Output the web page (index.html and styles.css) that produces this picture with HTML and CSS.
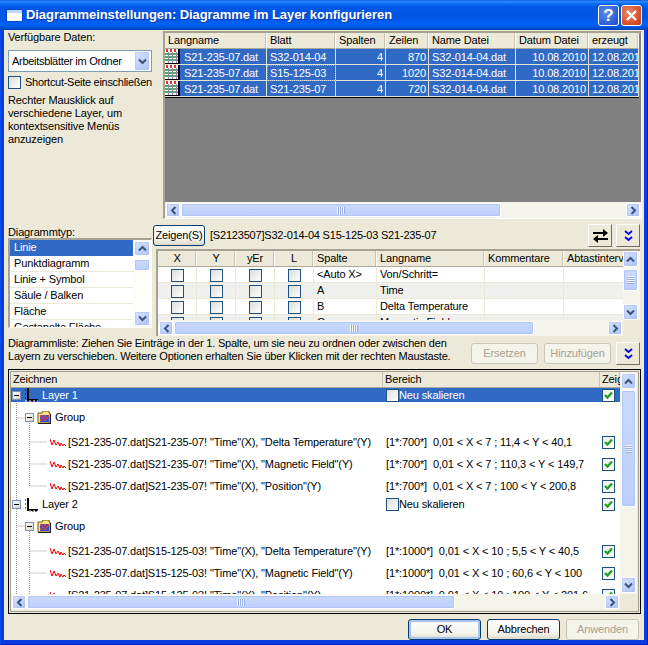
FILE: index.html
```html
<!DOCTYPE html>
<html lang="de">
<head>
<meta charset="utf-8">
<title>Diagrammeinstellungen</title>
<link rel="stylesheet" href="styles.css">
</head>
<body>
<svg class="defs" width="0" height="0" aria-hidden="true">
  <defs>
    <symbol id="i-up" viewBox="0 0 9 7"><path d="M1 5.5 4.5 2 8 5.5" fill="none" stroke="#3f5279" stroke-width="2"/></symbol>
    <symbol id="i-down" viewBox="0 0 9 7"><path d="M1 1.5 4.5 5 8 1.5" fill="none" stroke="#3f5279" stroke-width="2"/></symbol>
    <symbol id="i-left" viewBox="0 0 7 9"><path d="M5.5 1 2 4.5 5.5 8" fill="none" stroke="#3f5279" stroke-width="2"/></symbol>
    <symbol id="i-right" viewBox="0 0 7 9"><path d="M1.5 1 5 4.5 1.5 8" fill="none" stroke="#3f5279" stroke-width="2"/></symbol>
    <symbol id="i-dbl" viewBox="0 0 9 13"><path d="M1 2 4.5 5 8 2M1 8 4.5 11 8 8" fill="none" stroke="#0000e6" stroke-width="1.8"/></symbol>
    <symbol id="i-sheet" viewBox="0 0 15 15">
      <rect width="15" height="15" fill="#000"/>
      <rect x="0" y="0" width="13" height="14" fill="#fff"/>
      <path d="M1 0h2v3H1zM5 0h2v3H5zM9 0h2v3H9z" fill="#e03030"/>
      <path d="M0 4h13v2H0zM0 7h13v2H0zM0 10h13v2H0z" fill="#39c04a"/>
      <path d="M3 3h1v11H3zM7 3h1v11H7zM11 3h1v11h-1z" fill="#9a7fb8"/>
    </symbol>
    <symbol id="i-layer" viewBox="0 0 13 14">
      <path d="M2 0h2v11h9v2H2z" fill="#000"/>
      <path d="M0 2h2M0 6h2M0 10h2M5 13v1M8 13v1M11 13v1" stroke="#000" stroke-dasharray="1 1"/>
      <path d="M0 13h13" stroke="#fff" stroke-dasharray="2 2"/>
    </symbol>
    <symbol id="i-group" viewBox="0 0 14 13">
      <path d="M1 2h4l1-2h6v2h1v10H1z" fill="#ffe27a" stroke="#6b5a1c"/>
      <rect x="3" y="4" width="9" height="7" fill="#3a4fd0"/>
      <path d="M3 4h2v2H3zM7 4h2v2H7zM11 4h1v2h-1zM5 6h2v2H5zM9 6h2v2H9zM3 8h2v2H3zM7 8h2v2H7z" fill="#e03c3c"/>
      <path d="M1 12h13v1H1zM13 3h1v10h-1z" fill="#222"/>
    </symbol>
    <symbol id="i-wave" viewBox="0 0 16 9"><path d="M0 1 2 7 4 2 6 7 8 4 10 8 11 5 13 8 14 6 16 8" fill="none" stroke="#f00000" stroke-width="1"/></symbol>
    <symbol id="i-check" viewBox="0 0 13 13"><path d="M3 6 5.5 8.5 10 3.5" fill="none" stroke="#21a121" stroke-width="2.4"/></symbol>
  </defs>
</svg>

<div class="window">
  <header class="titlebar">
    <span class="app-icon"></span>
    <h1 class="title">Diagrammeinstellungen: Diagramme im Layer konfigurieren</h1>
    <span class="cap-btn cap-help">?</span>
    <span class="cap-btn cap-close">
      <svg width="13" height="13" viewBox="0 0 13 13"><path d="M2 2 11 11M11 2 2 11" stroke="#fff" stroke-width="2.4" fill="none"/></svg>
    </span>
  </header>

  <main class="client">
    <section class="top">
      <div class="source">
        <label class="lbl lbl-data">Verfügbare Daten:</label>
        <div class="combo">
          <span class="combo-text">Arbeitsblätter im Ordner</span>
          <span class="sb-btn combo-btn"><svg width="9" height="7"><use href="#i-down"/></svg></span>
        </div>
        <div class="check-row"><span class="cb"></span><span>Shortcut-Seite einschließen</span></div>
        <p class="help-text">Rechter Mausklick auf verschiedene Layer, um kontextsensitive Menüs anzuzeigen</p>
      </div>

      <div class="sheets">
        <table class="sheet-table">
          <colgroup><col class="c1"><col class="c2"><col class="c3"><col class="c4"><col class="c5"><col class="c6"><col class="c7"></colgroup>
          <thead><tr><th>Langname</th><th>Blatt</th><th>Spalten</th><th>Zeilen</th><th>Name Datei</th><th>Datum Datei</th><th>erzeugt</th></tr></thead>
          <tbody>
            <tr><td class="ico"><svg width="15" height="15"><use href="#i-sheet"/></svg><span>S21-235-07.dat</span></td><td>S32-014-04</td><td class="r">4</td><td class="r">870</td><td>S32-014-04.dat</td><td class="r">10.08.2010</td><td>12.08.2010</td></tr>
            <tr><td class="ico"><svg width="15" height="15"><use href="#i-sheet"/></svg><span>S21-235-07.dat</span></td><td class="focus">S15-125-03</td><td class="r">4</td><td class="r">1020</td><td>S32-014-04.dat</td><td class="r">10.08.2010</td><td>12.08.2010</td></tr>
            <tr><td class="ico"><svg width="15" height="15"><use href="#i-sheet"/></svg><span>S21-235-07.dat</span></td><td>S21-235-07</td><td class="r">4</td><td class="r">720</td><td>S32-014-04.dat</td><td class="r">10.08.2010</td><td>12.08.2010</td></tr>
          </tbody>
        </table>
        <div class="gray-fill"></div>
        <div class="hbar hbar-sheets">
          <span class="sb-btn"><svg width="7" height="9"><use href="#i-left"/></svg></span>
          <span class="thumb thumb-sheets"><i class="grip-v"></i></span>
          <span class="track"></span>
          <span class="sb-btn"><svg width="7" height="9"><use href="#i-right"/></svg></span>
        </div>
      </div>
    </section>

    <section class="mid">
      <div class="types">
        <label class="lbl">Diagrammtyp:</label>
        <div class="typelist">
          <ul class="items">
            <li class="sel">Linie</li>
            <li>Punktdiagramm</li>
            <li>Linie + Symbol</li>
            <li>Säule / Balken</li>
            <li>Fläche</li>
            <li>Gestapelte Fläche</li>
          </ul>
          <div class="vbar vbar-list">
            <span class="sb-btn"><svg width="9" height="7"><use href="#i-up"/></svg></span>
            <span class="thumb thumb-list"></span>
            <span class="track"></span>
            <span class="sb-btn"><svg width="9" height="7"><use href="#i-down"/></svg></span>
          </div>
        </div>
      </div>

      <div class="columns">
        <div class="toolbar">
          <button class="btn btn-show">Zeigen(S)</button>
          <span class="crumb">[S2123507]S32-014-04 S15-125-03 S21-235-07</span>
          <span class="tool tool-swap">
            <svg width="15" height="14" viewBox="0 0 15 14"><path d="M0 3h10V0l5 4-5 4V5H0z" fill="#000"/><path d="M15 11H5v3L0 10l5-4v3h10z" fill="#000"/></svg>
          </span>
          <span class="tool"><svg width="9" height="13"><use href="#i-dbl"/></svg></span>
        </div>
        <div class="coltable">
          <div class="coltable-main">
            <table class="col-table">
              <colgroup><col class="k1"><col class="k1"><col class="k1"><col class="k1"><col class="k2"><col class="k3"><col class="k4"><col class="k5"></colgroup>
              <thead><tr><th class="c">X</th><th class="c">Y</th><th class="c">yEr</th><th class="c">L</th><th>Spalte</th><th>Langname</th><th>Kommentare</th><th>Abtastintervall</th></tr></thead>
              <tbody>
                <tr><td class="c"><span class="cb"></span></td><td class="c"><span class="cb"></span></td><td class="c"><span class="cb"></span></td><td class="c"><span class="cb"></span></td><td>&lt;Auto X&gt;</td><td>Von/Schritt=</td><td></td><td></td></tr>
                <tr class="alt"><td class="c"><span class="cb"></span></td><td class="c"><span class="cb"></span></td><td class="c"><span class="cb"></span></td><td class="c"><span class="cb"></span></td><td>A</td><td>Time</td><td></td><td></td></tr>
                <tr><td class="c"><span class="cb"></span></td><td class="c"><span class="cb"></span></td><td class="c"><span class="cb"></span></td><td class="c"><span class="cb"></span></td><td>B</td><td>Delta Temperature</td><td></td><td></td></tr>
                <tr class="alt"><td class="c"><span class="cb"></span></td><td class="c"><span class="cb"></span></td><td class="c"><span class="cb"></span></td><td class="c"><span class="cb"></span></td><td>C</td><td>Magnetic Field</td><td></td><td></td></tr>
              </tbody>
            </table>
          </div>
          <div class="vbar vbar-cols">
            <span class="sb-btn"><svg width="9" height="7"><use href="#i-up"/></svg></span>
            <span class="thumb thumb-cols"><i class="grip-h"></i></span>
            <span class="track"></span>
            <span class="sb-btn"><svg width="9" height="7"><use href="#i-down"/></svg></span>
          </div>
          <div class="hbar hbar-cols">
            <span class="sb-btn"><svg width="7" height="9"><use href="#i-left"/></svg></span>
            <span class="thumb thumb-colsh"><i class="grip-v"></i></span>
            <span class="track"></span>
            <span class="sb-btn"><svg width="7" height="9"><use href="#i-right"/></svg></span>
          </div>
        </div>
      </div>
    </section>

    <section class="hint">
      <p class="hint-text">Diagrammliste: Ziehen Sie Einträge in der 1. Spalte, um sie neu zu ordnen oder zwischen den<br>Layern zu verschieben. Weitere Optionen erhalten Sie über Klicken mit der rechten Maustaste.</p>
      <button class="btn btn-off btn-wide">Ersetzen</button>
      <button class="btn btn-off btn-wide">Hinzufügen</button>
      <span class="tool tool-hint"><svg width="9" height="13"><use href="#i-dbl"/></svg></span>
    </section>

    <section class="tree">
      <div class="tree-inner">
        <div class="tree-main">
          <div class="tree-head"><span class="th1">Zeichnen</span><span class="th2">Bereich</span><span class="th3">Zeigen</span></div>
          <div class="tree-body">
            <svg class="tree-lines" width="610" height="210" aria-hidden="true">
              <path d="M5.5 13V208M5.5 30H15M18.5 35V98M18.5 54H36M18.5 76H36M18.5 98H36M5.5 138H15M18.5 143V208M18.5 163H36M18.5 185H36M18.5 207H36" fill="none" stroke="#9a9a9a" stroke-dasharray="1 1"/>
            </svg>
            <div class="row row-layer row-sel">
              <div class="cell-name ind0"><span class="tog"></span><svg class="ic-layer" width="13" height="14"><use href="#i-layer"/></svg><span>Layer 1</span></div>
              <div class="cell-range"><span class="cb"></span><span>Neu skalieren</span></div>
              <div class="cell-show"><span class="cb cb-on"><svg width="11" height="11" viewBox="1 1 11 11"><use href="#i-check" width="13" height="13"/></svg></span></div>
            </div>
            <div class="row row-group">
              <div class="cell-name ind1"><span class="tog"></span><svg class="ic-group" width="14" height="13"><use href="#i-group"/></svg><span>Group</span></div>
            </div>
            <div class="row row-item">
              <div class="cell-name ind2"><svg class="ic-wave" width="16" height="9"><use href="#i-wave"/></svg><span>[S21-235-07.dat]S21-235-07! "Time"(X), "Delta Temperature"(Y)</span></div>
              <div class="cell-range pre">[1*:700*]  0,01 &lt; X &lt; 7 ; 11,4 &lt; Y &lt; 40,1</div>
              <div class="cell-show"><span class="cb cb-on"><svg width="11" height="11" viewBox="1 1 11 11"><use href="#i-check" width="13" height="13"/></svg></span></div>
            </div>
            <div class="row row-item">
              <div class="cell-name ind2"><svg class="ic-wave" width="16" height="9"><use href="#i-wave"/></svg><span>[S21-235-07.dat]S21-235-07! "Time"(X), "Magnetic Field"(Y)</span></div>
              <div class="cell-range pre">[1*:700*]  0,01 &lt; X &lt; 7 ; 110,3 &lt; Y &lt; 149,7</div>
              <div class="cell-show"><span class="cb cb-on"><svg width="11" height="11" viewBox="1 1 11 11"><use href="#i-check" width="13" height="13"/></svg></span></div>
            </div>
            <div class="row row-item">
              <div class="cell-name ind2"><svg class="ic-wave" width="16" height="9"><use href="#i-wave"/></svg><span>[S21-235-07.dat]S21-235-07! "Time"(X), "Position"(Y)</span></div>
              <div class="cell-range pre">[1*:700*]  0,01 &lt; X &lt; 7 ; 100 &lt; Y &lt; 200,8</div>
              <div class="cell-show"><span class="cb cb-on"><svg width="11" height="11" viewBox="1 1 11 11"><use href="#i-check" width="13" height="13"/></svg></span></div>
            </div>
            <div class="row row-layer row-l2">
              <div class="cell-name ind0"><span class="tog"></span><svg class="ic-layer" width="13" height="14"><use href="#i-layer"/></svg><span>Layer 2</span></div>
              <div class="cell-range"><span class="cb"></span><span>Neu skalieren</span></div>
              <div class="cell-show"><span class="cb cb-on"><svg width="11" height="11" viewBox="1 1 11 11"><use href="#i-check" width="13" height="13"/></svg></span></div>
            </div>
            <div class="row row-group row-g2">
              <div class="cell-name ind1"><span class="tog"></span><svg class="ic-group" width="14" height="13"><use href="#i-group"/></svg><span>Group</span></div>
            </div>
            <div class="row row-item">
              <div class="cell-name ind2"><svg class="ic-wave" width="16" height="9"><use href="#i-wave"/></svg><span>[S21-235-07.dat]S15-125-03! "Time"(X), "Delta Temperature"(Y)</span></div>
              <div class="cell-range pre">[1*:1000*]  0,01 &lt; X &lt; 10 ; 5,5 &lt; Y &lt; 40,5</div>
              <div class="cell-show"><span class="cb cb-on"><svg width="11" height="11" viewBox="1 1 11 11"><use href="#i-check" width="13" height="13"/></svg></span></div>
            </div>
            <div class="row row-item">
              <div class="cell-name ind2"><svg class="ic-wave" width="16" height="9"><use href="#i-wave"/></svg><span>[S21-235-07.dat]S15-125-03! "Time"(X), "Magnetic Field"(Y)</span></div>
              <div class="cell-range pre">[1*:1000*]  0,01 &lt; X &lt; 10 ; 60,6 &lt; Y &lt; 100</div>
              <div class="cell-show"><span class="cb cb-on"><svg width="11" height="11" viewBox="1 1 11 11"><use href="#i-check" width="13" height="13"/></svg></span></div>
            </div>
            <div class="row row-item">
              <div class="cell-name ind2"><svg class="ic-wave" width="16" height="9"><use href="#i-wave"/></svg><span>[S21-235-07.dat]S15-125-03! "Time"(X), "Position"(Y)</span></div>
              <div class="cell-range pre">[1*:1000*]  0,01 &lt; X &lt; 10 ; 100 &lt; Y &lt; 201,6</div>
              <div class="cell-show"><span class="cb cb-on"><svg width="11" height="11" viewBox="1 1 11 11"><use href="#i-check" width="13" height="13"/></svg></span></div>
            </div>
          </div>
        </div>
        <div class="vbar vbar-tree">
          <span class="sb-btn"><svg width="9" height="7"><use href="#i-up"/></svg></span>
          <span class="thumb thumb-tree"><i class="grip-h"></i></span>
          <span class="track"></span>
          <span class="sb-btn"><svg width="9" height="7"><use href="#i-down"/></svg></span>
        </div>
        <div class="hbar hbar-tree">
          <span class="sb-btn"><svg width="7" height="9"><use href="#i-left"/></svg></span>
          <span class="thumb thumb-treeh"><i class="grip-v"></i></span>
          <span class="track"></span>
          <span class="sb-btn"><svg width="7" height="9"><use href="#i-right"/></svg></span>
        </div>
      </div>
    </section>

    <footer class="footer">
      <button class="btn btn-foot btn-default">OK</button>
      <button class="btn btn-foot">Abbrechen</button>
      <button class="btn btn-foot btn-off">Anwenden</button>
    </footer>
  </main>
</div>
</body>
</html>
```

FILE: styles.css
```css
* { box-sizing: border-box; }
html, body { margin: 0; padding: 0; }
body { width: 648px; height: 645px; overflow: hidden; font: 11px/13px "Liberation Sans", Arial, sans-serif; letter-spacing: -0.13px; color: #000; }
.defs { position: absolute; }
svg { display: block; }
p, h1, ul { margin: 0; padding: 0; }

.window {
  width: 648px; height: 645px; display: flex; flex-direction: column;
  background: #0a3ce0;
  border-left: 1px solid #0a4be6; border-right: 1px solid #0019cf; border-bottom: 1px solid #0019cf;
}

/* title bar */
.titlebar {
  height: 30px; margin: 0 -1px; padding: 0 6px 0 7px; display: flex; align-items: center; flex: none;
  background: linear-gradient(#0a5ce8 0, #2f8cff 6%, #0a6cf4 12%, #0058e6 24%, #0054e3 55%, #0059ee 70%, #0064f6 80%, #0058e4 90%, #003fb0 100%);
}
.app-icon { width: 15px; height: 11px; margin-top: 1px; background: linear-gradient(#bcd7ff 0 3px, #fff 3px); flex: none; box-shadow: 0 0 0 1px rgba(0,30,120,.25); }
.title {
  flex: 1; margin: 0 0 0 4px; color: #fff; font: bold 13px/16px "Liberation Sans", sans-serif;
  letter-spacing: -0.07px; text-shadow: 1px 1px 0 #0a3aa8; white-space: nowrap;
}
.cap-btn {
  width: 21px; height: 21px; border: 1px solid #fff; border-radius: 3px; display: flex; align-items: center; justify-content: center;
  color: #fff; font: bold 17px/1 "Liberation Sans", sans-serif;
}
.cap-help { background: radial-gradient(circle at 35% 35%, #5b8cf0, #2a5fd8 70%, #1a47b8); margin-right: 2px; }
.cap-close { background: radial-gradient(circle at 35% 35%, #e88a6a, #d8502c 65%, #b93a18); }

/* client */
.client { flex: 1; margin: 0 3px 4px 3px; background: #ece9d8; padding-top: 1px; display: flex; flex-direction: column; min-height: 0; }

.lbl { display: block; line-height: 13px; }

.top { display: flex; height: 188px; flex: none; }
.source { width: 159px; padding: 0 6px 0 4px; flex: none; }
.lbl-data { height: 19px; }
.combo {
  width: 144px; height: 22px; border: 1px solid #7f9db9; background: #fff; display: flex; align-items: center; padding: 0 1px 0 3px;
}
.combo-text { flex: 1; white-space: nowrap; letter-spacing: -0.3px; }
.combo-btn { width: 16px; height: 20px; }
.check-row { display: flex; align-items: center; gap: 4px; height: 13px; margin-top: 4px; white-space: nowrap; letter-spacing: -0.28px; }
.help-text { margin-top: 5px; width: 145px; line-height: 13px; }

.cb {
  display: block; width: 13px; height: 13px; border: 1px solid #1c5180; flex: none;
  background: linear-gradient(135deg, #dcdcd7, #fff);
}
.cb-on { background: linear-gradient(135deg, #eeeeea, #fff); }

/* sheets grid */
.sheets { flex: 1; margin: 0 2px 0 0; border: 2px solid #a5a294; border-right: 1px solid #fff; border-bottom: 1px solid #fff; background: #808080; display: flex; flex-direction: column; min-width: 0; }
.sheet-table { border-collapse: separate; border-spacing: 0; table-layout: fixed; width: 474px; flex: none; border-bottom: 1px solid #000; background: #316ac5; }
.c1 { width: 102px; } .c2 { width: 69px; } .c3 { width: 50px; } .c4 { width: 43px; } .c5 { width: 87px; } .c6 { width: 73px; } .c7 { width: 50px; }
.sheet-table th, .col-table th {
  height: 16px; padding: 0 3px; font-weight: normal; text-align: left; background: #ece9d8; white-space: nowrap; overflow: hidden;
  border-bottom: 1px solid #aca899; border-right: 1px solid #fff; box-shadow: inset -1px 0 0 #c7c5b2;
}
.sheet-table td {
  height: 16px; padding: 1px 2px 0 3px; color: #fff; white-space: nowrap; overflow: hidden;
  border-bottom: 1px solid #e6e3d3; border-right: 1px solid #e6e3d3;
}
.sheet-table .r { text-align: right; }
.sheet-table .ico { padding: 0; }
.ico svg { float: left; }
.ico span { display: block; padding: 1px 0 0 19px; line-height: 14px; }
.sheet-table .focus { outline: 1px dotted #e0a040; outline-offset: -1px; }
.gray-fill { flex: 1; background: #808080; }

/* scrollbars */
.hbar { display: flex; height: 16px; flex: none; background: #f5f4ea; padding: 1px; align-items: stretch; gap: 1px; }
.vbar { display: flex; flex-direction: column; width: 17px; flex: none; background: #f5f4ea; padding: 1px; align-items: stretch; gap: 1px; }
.track { flex: 1; }
.sb-btn {
  flex: none; min-width: 14px; min-height: 14px; display: flex; align-items: center; justify-content: center;
  background: linear-gradient(135deg, #d6e2fe, #aec4f9); border: 1px solid #fff; border-radius: 2px; box-shadow: 0 0 0 .5px #a8bce8 inset;
}
.thumb {
  flex: none; display: flex; align-items: center; justify-content: center;
  background: linear-gradient(#cad9fd, #bccffb); border: 1px solid #fff; border-radius: 2px; box-shadow: inset 0 0 0 1px #b1c6f8;
}
.grip-v { width: 8px; height: 7px; background: repeating-linear-gradient(90deg, #f4f7ff 0 1px, #98aee0 1px 2px); }
.grip-h { width: 7px; height: 8px; background: repeating-linear-gradient(#f4f7ff 0 1px, #98aee0 1px 2px); }
.thumb-sheets { width: 320px; }

/* mid */
.mid { display: flex; height: 118px; flex: none; }
.types { width: 149px; flex: none; padding: 7px 0 0 4px; }
.types .lbl { margin-bottom: -1px; }
.typelist { display: flex; height: 90px; width: 144px; border: 2px solid #a5a294; border-right: 1px solid #fff; border-bottom: 1px solid #fff; background: #fff; overflow: hidden; }
.items { list-style: none; flex: 1; overflow: hidden; min-width: 0; }
.items li { height: 16px; line-height: 15px; padding-left: 4px; border-bottom: 1px solid #ece9d8; white-space: nowrap; }
.items .sel { background: #316ac5; color: #fff; border-bottom-color: #316ac5; }
.vbar-list { width: 18px; background: #fdfdfa; }
.vbar-list .sb-btn { height: 15px; }
.thumb-list { height: 12px; margin-top: 2px; }

.columns { flex: 1; min-width: 0; }
.toolbar { display: flex; align-items: center; height: 30px; padding: 3px 4px 0 0; }
.btn {
  font: 11px/13px "Liberation Sans", Arial, sans-serif; letter-spacing: -0.13px; color: #000; background: linear-gradient(#fff, #f4f3ec 70%, #dcd8c8); border: 1px solid #003c74; border-radius: 3px; padding: 0;
}
.btn-show { width: 52px; height: 21px; }
.crumb { flex: 1; margin-left: 5px; white-space: nowrap; letter-spacing: -0.2px; }
.tool { width: 24px; height: 23px; display: flex; align-items: center; justify-content: center; background: #ece9d8; border: 1px solid; border-color: #fff #716f64 #716f64 #fff; flex: none; }
.tool-swap { margin-right: 4px; }
.coltable { display: grid; grid-template-columns: 465px 18px; grid-template-rows: 69px 16px; margin-left: 3px; width: 484px; height: 87px; border: 2px solid #a5a294; border-right: 0; border-bottom: 0; }
.coltable-main { overflow: hidden; background: #fff; }
.col-table { border-collapse: separate; border-spacing: 0; table-layout: fixed; width: 480px; background: #fff; }
.k1 { width: 39px; } .k2 { width: 63px; } .k3 { width: 108px; } .k4 { width: 79px; } .k5 { width: 74px; }
.col-table th { height: 16px; }
.col-table th.c, .col-table td.c { text-align: center; padding: 0; }
.col-table td { height: 16px; padding: 0 3px; border-right: 1px solid #ece9d8; border-bottom: 1px solid #ece9d8; white-space: nowrap; overflow: hidden; }
.col-table td .cb { margin: 1px auto 0; }
.col-table .alt td { background: #f0f0ee; }
.vbar-cols { grid-row: 1; grid-column: 2; background: #f5f4ea; padding: 0 2px 0 0; }
.vbar-cols .sb-btn { height: 16px; }
.thumb-cols { height: 22px; margin-top: 1px; }
.hbar-cols { grid-column: 1; grid-row: 2; }
.thumb-colsh { width: 360px; }

/* hint */
.hint { display: flex; align-items: center; height: 32px; flex: none; padding-left: 4px; }
.hint-text { width: 463px; white-space: nowrap; flex: none; align-self: flex-start; letter-spacing: -0.2px; }
.btn-off { background: #f5f4ea; color: #a5a294; border-color: #c9c7ba; }
.btn-wide { width: 67px; height: 21px; margin-right: 6px; }
.btn-wide + .tool { margin-left: -1px; }

/* tree */
.tree { flex: none; margin-left: 4px; width: 633px; height: 245px; border: 1px solid #000; padding: 1px; background: #ece9d8; }
.tree-inner { width: 100%; height: 100%; border: 1px solid #a5a294; display: grid; grid-template-columns: 609px 18px; grid-template-rows: 222px 16px; }
.tree-main { overflow: hidden; background: #fff; display: flex; flex-direction: column; }
.tree-head { display: grid; grid-template-columns: 372px 217px 20px; height: 16px; background: #ece9d8; flex: none; border-bottom: 1px solid #aca899; }
.tree-head span { padding-left: 2px; line-height: 15px; overflow: hidden; white-space: nowrap; box-shadow: inset -1px 0 0 #c7c5b2; }
.tree-body { position: relative; flex: 1; min-height: 0; overflow: hidden; }
.tree-lines { position: absolute; left: 0; top: 0; }
.row { display: grid; grid-template-columns: 372px 217px 20px; align-items: center; position: relative; }
.row-layer { height: 14px; }
.row-l2 { height: 15px; }
.row-group { height: 29px; padding-top: 1px; }
.row-g2 { height: 28px; }
.row-item { height: 22px; }
.row-sel { background: #316ac5; color: #fff; }
.cell-name { display: flex; align-items: center; white-space: nowrap; }
.ind0 { padding-left: 1px; }
.ind1 { padding-left: 14px; }
.ind2 { padding-left: 39px; }
.tog {
  width: 9px; height: 9px; border: 1px solid #7a93b8; background: linear-gradient(135deg, #fff, #d8d4c4); position: relative; flex: none;
}
.tog::after { content: ""; position: absolute; left: 1px; right: 1px; top: 3px; height: 1px; background: #000; }
.ic-layer { margin: 0 4px 0 4px; }
.ic-group { margin: 0 4px 0 3px; }
.ic-wave { margin-right: 2px; }
.cell-range { display: flex; align-items: center; padding-left: 3px; white-space: nowrap; }
.pre { white-space: pre; display: block; }
.cell-show { padding-left: 2px; }
.vbar-tree { grid-column: 2; grid-row: 1; }
.vbar-tree .sb-btn { height: 16px; }
.thumb-tree { height: 117px; }
.hbar-tree { grid-column: 1; grid-row: 2; }
.thumb-treeh { width: 428px; }

/* footer */
.footer { flex: 1; display: flex; justify-content: flex-end; align-items: flex-start; gap: 6px; padding: 5px 5px 0 0; }
.btn-foot { width: 73px; height: 21px; }
.btn-default { box-shadow: inset 0 0 0 2px #a9c3ee; }
```
